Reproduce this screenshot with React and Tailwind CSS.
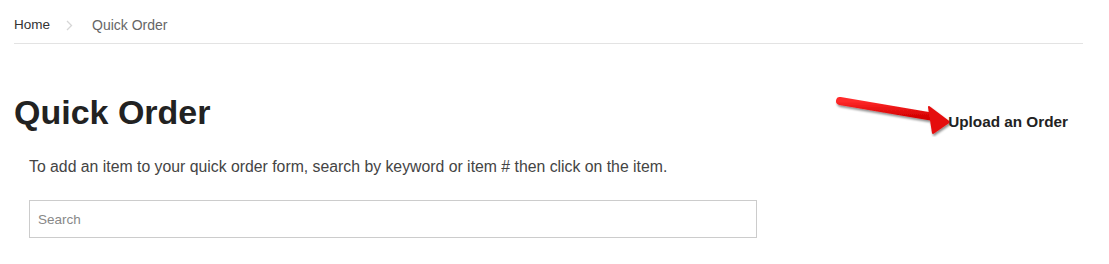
import React from 'react';

const font = { fontFamily: '"Liberation Sans", Arial, sans-serif' };

const RedArrow = () => (
  <svg width="116" height="42" viewBox="0 0 116 42" className="block shrink-0">
    <defs>
      <filter id="sh" x="-10%" y="-20%" width="130%" height="160%">
        <feDropShadow dx="1" dy="2" stdDeviation="1.2" floodColor="#000" floodOpacity="0.45" />
      </filter>
      <linearGradient id="rg" x1="0" y1="0" x2="0" y2="1">
        <stop offset="0" stopColor="#ff2a2a" />
        <stop offset="1" stopColor="#d40000" />
      </linearGradient>
    </defs>
    <g filter="url(#sh)">
      <line x1="6" y1="6" x2="100" y2="22" stroke="url(#rg)" strokeWidth="8" strokeLinecap="round" />
      <polygon points="95,12 115,27 99,38" fill="#e50d0d" stroke="#e50d0d" strokeWidth="2" strokeLinejoin="round" />
    </g>
  </svg>
);

export default function App() {
  return (
    <div className="w-[1109px] h-[264px] bg-white overflow-hidden" style={font}>
      <div className="pl-[14px] pr-[26px]">
        {/* breadcrumb */}
        <div className="flex items-center h-[44px] pt-[8px] border-b border-[#e3e3e3]">
          <span className="text-[#333] text-[13.5px]">Home</span>
          <svg width="7" height="11" viewBox="0 0 7 11" className="ml-[16px] mr-[19px]">
            <path d="M1 1 L5.5 5.5 L1 10" fill="none" stroke="#d6d6d6" strokeWidth="1.3" />
          </svg>
          <span className="text-[#666] text-[14px]">Quick Order</span>
        </div>

        {/* heading row */}
        <div className="flex justify-between items-start mt-[48px]">
          <h1 className="text-[34px] leading-[40px] font-bold text-[#222]">Quick Order</h1>
          <div className="flex items-start mt-[3px] mr-[15px]">
            <RedArrow />
            <span className="-ml-[2px] mt-[17px] text-[15.3px] leading-[20px] font-bold text-[#222]">Upload an Order</span>
          </div>
        </div>

        <div className="pl-[15px]">
          <p className="mt-[20px] text-[15.8px] leading-[20px] text-[#444]">
            To add an item to your quick order form, search by keyword or item # then click on the item.
          </p>
          <input
            type="text"
            placeholder="Search"
            className="mt-[23px] block w-[728px] h-[38px] border border-[#cccccc] px-[8px] text-[13.5px] text-[#333] placeholder-[#888] outline-none"
            style={font}
          />
        </div>
      </div>
    </div>
  );
}
